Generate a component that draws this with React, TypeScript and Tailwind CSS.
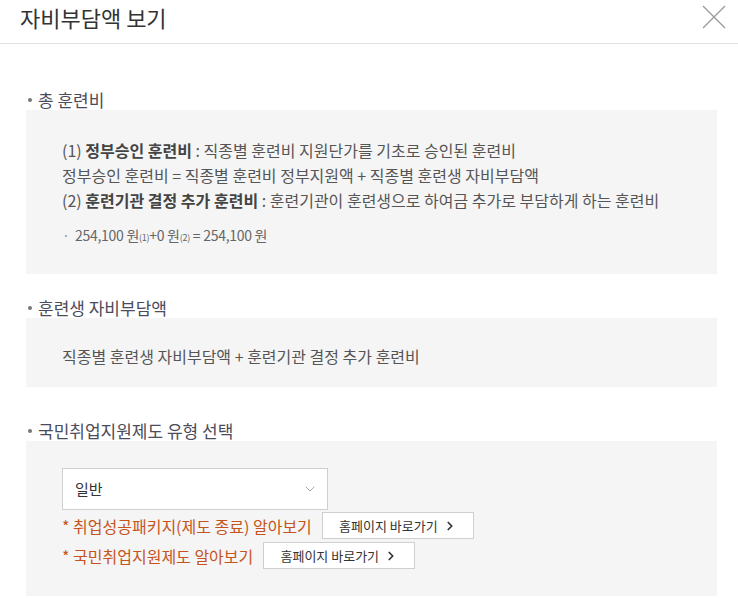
import { ChevronDown, ChevronRight } from "lucide-react";

const font = {
  fontFamily: '"Noto Sans CJK KR", "Noto Sans", sans-serif',
};

function SectionLabel({ children }: { children: string }) {
  return (
    <div className="flex items-center h-[20px] text-[17px] text-[#4b4b5b]">
      <span className="w-[4px] h-[4px] ml-[2px] mr-[6px] rounded-full bg-[#777]" />
      <span>{children}</span>
    </div>
  );
}

function LinkButton() {
  return (
    <button className="flex items-center justify-center gap-[5px] w-[152px] h-[27px] bg-white border border-[#cfcfcf] text-[13px] text-[#333]">
      홈페이지 바로가기
      <ChevronRight className="w-[14px] h-[14px] text-[#333]" strokeWidth={3} />
    </button>
  );
}

export default function App() {
  return (
    <div className="w-[738px] h-[598px] bg-white overflow-hidden" style={font}>
      {/* Header */}
      <div className="flex items-center justify-between h-[44px] border-b border-[#e0e0e0] pl-[20px] pr-[12px]">
        <h1 className="text-[22px] text-[#333] pb-[8px]">자비부담액 보기</h1>
        <svg width="24" height="24" viewBox="0 0 24 24" className="mb-[10px]">
          <path d="M1 1 L23 23 M23 1 L1 23" stroke="#999" strokeWidth="1.3" fill="none" />
        </svg>
      </div>

      <div className="pl-[26px] pr-[21px]">
        {/* 총 훈련비 */}
        <div className="mt-[46px]">
          <SectionLabel>총 훈련비</SectionLabel>
          <div className="bg-[#f5f5f5] pt-[28px] pb-[26px] pl-[36px] text-[16px] text-[#555]">
            <p className="leading-[25px]">
              (1) <b className="text-[#444]">정부승인 훈련비</b> : 직종별 훈련비 지원단가를 기초로 승인된 훈련비
            </p>
            <p className="leading-[25px]">
              정부승인 훈련비 = 직종별 훈련비 정부지원액 + 직종별 훈련생 자비부담액
            </p>
            <p className="leading-[25px]">
              (2) <b className="text-[#444]">훈련기관 결정 추가 훈련비</b> : 훈련기관이 훈련생으로 하여금 추가로 부담하게 하는 훈련비
            </p>
            <p className="mt-[12px] leading-[20px] text-[14px] text-[#666] tracking-[-0.02em]">
              <span className="inline-block w-[13px] text-[#999]">·</span>
              254,100 원<span className="text-[9px]">(1)</span>+0 원<span className="text-[9px]">(2)</span> = 254,100 원
            </p>
          </div>
        </div>

        {/* 훈련생 자비부담액 */}
        <div className="mt-[24px]">
          <SectionLabel>훈련생 자비부담액</SectionLabel>
          <div className="bg-[#f5f5f5] pt-[26px] pb-[18px] pl-[36px] text-[16px] text-[#555] leading-[25px]">
            직종별 훈련생 자비부담액 + 훈련기관 결정 추가 훈련비
          </div>
        </div>

        {/* 국민취업지원제도 유형 선택 */}
        <div className="mt-[34px]">
          <SectionLabel>국민취업지원제도 유형 선택</SectionLabel>
          <div className="bg-[#f5f5f5] pt-[27px] pb-[27px] pl-[36px]">
            <div className="flex items-center justify-between w-[266px] h-[42px] bg-white border border-[#cfcfcf] pl-[12px] pr-[9px] text-[15px] text-[#333]">
              <span>일반</span>
              <ChevronDown className="w-[16px] h-[16px] text-[#999]" strokeWidth={1.3} />
            </div>
            <div className="flex items-center gap-[10px] mt-[2px]">
              <span className="text-[16px] text-[#c4541b]">* 취업성공패키지(제도 종료) 알아보기</span>
              <LinkButton />
            </div>
            <div className="flex items-center gap-[10px] mt-[3px]">
              <span className="text-[16px] text-[#c4541b]">* 국민취업지원제도 알아보기</span>
              <LinkButton />
            </div>
          </div>
        </div>
      </div>
    </div>
  );
}
